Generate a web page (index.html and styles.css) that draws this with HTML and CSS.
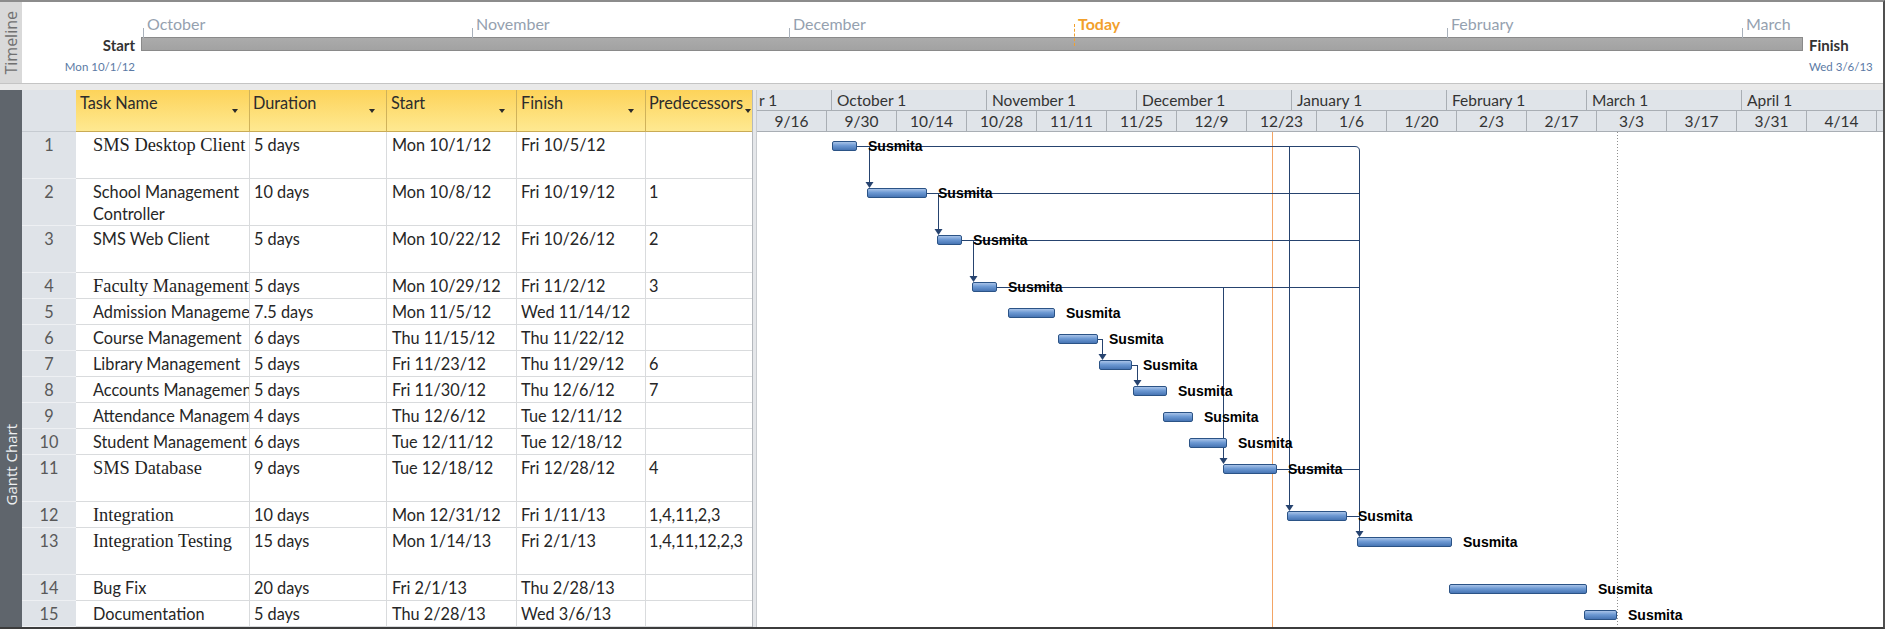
FILE: index.html
```html
<!DOCTYPE html>
<html>
<head>
<meta charset="utf-8">
<title>Gantt Chart</title>
<link rel="stylesheet" href="styles.css">
</head>
<body>
<div class="app">
  <section class="timeline">
    <div class="tl-strip"><span class="vlabel">Timeline</span></div>
    <div class="tl-main">
      <div class="tl-ends">
        <div class="tl-end-label">Start</div>
        <div class="tl-end-date">Mon 10/1/12</div>
      </div>
      <div class="tl-track">
        <span class="tl-mark" style="left:1px">October</span>
        <span class="tl-mark" style="left:330px">November</span>
        <span class="tl-mark" style="left:647px">December</span>
        <span class="tl-mark today" style="left:932px">Today</span>
        <span class="tl-mark" style="left:1305px">February</span>
        <span class="tl-mark" style="left:1600px">March</span>
      </div>
      <div class="tl-ends right">
        <div class="tl-end-label">Finish</div>
        <div class="tl-end-date">Wed 3/6/13</div>
      </div>
    </div>
  </section>
  <div class="pane-sep"></div>
  <section class="gantt">
    <div class="g-strip"><span class="vlabel">Gantt Chart</span></div>
    <div class="table">
      <div class="tr thead">
        <div class="td c-id"></div>
        <div class="td th c-name"><span>Task Name</span><i class="dd"></i></div>
        <div class="td th c-dur"><span>Duration</span><i class="dd"></i></div>
        <div class="td th c-start"><span>Start</span><i class="dd"></i></div>
        <div class="td th c-fin"><span>Finish</span><i class="dd"></i></div>
        <div class="td th c-pred"><span>Predecessors</span><i class="dd tight"></i></div>
      </div>
      <div class="tr tall"><div class="td c-id">1</div><div class="td c-name serif">SMS Desktop Client</div><div class="td c-dur">5 days</div><div class="td c-start">Mon 10/1/12</div><div class="td c-fin">Fri 10/5/12</div><div class="td c-pred"></div></div>
      <div class="tr tall"><div class="td c-id">2</div><div class="td c-name wrap">School Management Controller</div><div class="td c-dur">10 days</div><div class="td c-start">Mon 10/8/12</div><div class="td c-fin">Fri 10/19/12</div><div class="td c-pred">1</div></div>
      <div class="tr tall"><div class="td c-id">3</div><div class="td c-name">SMS Web Client</div><div class="td c-dur">5 days</div><div class="td c-start">Mon 10/22/12</div><div class="td c-fin">Fri 10/26/12</div><div class="td c-pred">2</div></div>
      <div class="tr"><div class="td c-id">4</div><div class="td c-name serif">Faculty Management</div><div class="td c-dur">5 days</div><div class="td c-start">Mon 10/29/12</div><div class="td c-fin">Fri 11/2/12</div><div class="td c-pred">3</div></div>
      <div class="tr"><div class="td c-id">5</div><div class="td c-name">Admission Management</div><div class="td c-dur">7.5 days</div><div class="td c-start">Mon 11/5/12</div><div class="td c-fin">Wed 11/14/12</div><div class="td c-pred"></div></div>
      <div class="tr"><div class="td c-id">6</div><div class="td c-name">Course Management</div><div class="td c-dur">6 days</div><div class="td c-start">Thu 11/15/12</div><div class="td c-fin">Thu 11/22/12</div><div class="td c-pred"></div></div>
      <div class="tr"><div class="td c-id">7</div><div class="td c-name">Library Management</div><div class="td c-dur">5 days</div><div class="td c-start">Fri 11/23/12</div><div class="td c-fin">Thu 11/29/12</div><div class="td c-pred">6</div></div>
      <div class="tr"><div class="td c-id">8</div><div class="td c-name">Accounts Management</div><div class="td c-dur">5 days</div><div class="td c-start">Fri 11/30/12</div><div class="td c-fin">Thu 12/6/12</div><div class="td c-pred">7</div></div>
      <div class="tr"><div class="td c-id">9</div><div class="td c-name">Attendance Management</div><div class="td c-dur">4 days</div><div class="td c-start">Thu 12/6/12</div><div class="td c-fin">Tue 12/11/12</div><div class="td c-pred"></div></div>
      <div class="tr"><div class="td c-id">10</div><div class="td c-name">Student Management</div><div class="td c-dur">6 days</div><div class="td c-start">Tue 12/11/12</div><div class="td c-fin">Tue 12/18/12</div><div class="td c-pred"></div></div>
      <div class="tr tall"><div class="td c-id">11</div><div class="td c-name serif">SMS Database</div><div class="td c-dur">9 days</div><div class="td c-start">Tue 12/18/12</div><div class="td c-fin">Fri 12/28/12</div><div class="td c-pred">4</div></div>
      <div class="tr"><div class="td c-id">12</div><div class="td c-name serif">Integration</div><div class="td c-dur">10 days</div><div class="td c-start">Mon 12/31/12</div><div class="td c-fin">Fri 1/11/13</div><div class="td c-pred">1,4,11,2,3</div></div>
      <div class="tr tall"><div class="td c-id">13</div><div class="td c-name serif">Integration Testing</div><div class="td c-dur">15 days</div><div class="td c-start">Mon 1/14/13</div><div class="td c-fin">Fri 2/1/13</div><div class="td c-pred">1,4,11,12,2,3</div></div>
      <div class="tr"><div class="td c-id">14</div><div class="td c-name">Bug Fix</div><div class="td c-dur">20 days</div><div class="td c-start">Fri 2/1/13</div><div class="td c-fin">Thu 2/28/13</div><div class="td c-pred"></div></div>
      <div class="tr"><div class="td c-id">15</div><div class="td c-name">Documentation</div><div class="td c-dur">5 days</div><div class="td c-start">Thu 2/28/13</div><div class="td c-fin">Wed 3/6/13</div><div class="td c-pred"></div></div>
    </div>
    <div class="splitter"></div>
    <div class="chart">
      <div class="ts">
        <div class="tier">
          <div class="tc m75">r 1</div>
          <div class="tc m155">October 1</div>
          <div class="tc m150">November 1</div>
          <div class="tc m155">December 1</div>
          <div class="tc m155">January 1</div>
          <div class="tc m140">February 1</div>
          <div class="tc m155">March 1</div>
          <div class="tc m141">April 1</div>
        </div>
        <div class="tier lower">
          <div class="tc w70">9/16</div>
          <div class="tc w70">9/30</div>
          <div class="tc w70">10/14</div>
          <div class="tc w70">10/28</div>
          <div class="tc w70">11/11</div>
          <div class="tc w70">11/25</div>
          <div class="tc w70">12/9</div>
          <div class="tc w70">12/23</div>
          <div class="tc w70">1/6</div>
          <div class="tc w70">1/20</div>
          <div class="tc w70">2/3</div>
          <div class="tc w70">2/17</div>
          <div class="tc w70">3/3</div>
          <div class="tc w70">3/17</div>
          <div class="tc w70">3/31</div>
          <div class="tc w70">4/14</div>
          <div class="tc w6"></div>
        </div>
      </div>
      <div class="cbody">
        <svg class="links" width="1126" height="495" viewBox="0 0 1126 495">
          <path class="today" d="M515.5 0 V495"/>
          <path class="finish" d="M860.5 0 V495"/>
          <path class="ln" d="M100 14.5 H598 Q602.5 14.5 602.5 19 M170 61.5 H602.5 M205 108.5 H602.5 M240 155.5 H602.5 M520 337.5 H602.5 M590 384.5 H602.5 M341 207.5 H345.5 M375 233.5 H380.5"/>
          <path class="ln" d="M112.5 14 V51 M181.5 61 V98 M216.5 108 V145 M345.5 207 V223 M380.5 233 V249 M466.5 155 V327 M532.5 14 V374 M602.5 19 V400"/>
          <g class="arr">
            <polygon points="108.5,50 116.5,50 112.5,56"/>
            <polygon points="177.5,97 185.5,97 181.5,103"/>
            <polygon points="212.5,144 220.5,144 216.5,150"/>
            <polygon points="341.5,222 349.5,222 345.5,228"/>
            <polygon points="376.5,248 384.5,248 380.5,254"/>
            <polygon points="462.5,326 470.5,326 466.5,332"/>
            <polygon points="528.5,373 536.5,373 532.5,379"/>
            <polygon points="598.5,399 606.5,399 602.5,405"/>
          </g>
        </svg>
        <div class="bar" style="left:75px;top:9px;width:25px"></div>
        <div class="bar" style="left:110px;top:56px;width:60px"></div>
        <div class="bar" style="left:180px;top:103px;width:25px"></div>
        <div class="bar" style="left:215px;top:150px;width:25px"></div>
        <div class="bar" style="left:251px;top:176px;width:47px"></div>
        <div class="bar" style="left:301px;top:202px;width:40px"></div>
        <div class="bar" style="left:342px;top:228px;width:33px"></div>
        <div class="bar" style="left:376px;top:254px;width:34px"></div>
        <div class="bar" style="left:406px;top:280px;width:30px"></div>
        <div class="bar" style="left:432px;top:306px;width:38px"></div>
        <div class="bar" style="left:466px;top:332px;width:54px"></div>
        <div class="bar" style="left:530px;top:379px;width:60px"></div>
        <div class="bar" style="left:600px;top:405px;width:95px"></div>
        <div class="bar" style="left:692px;top:452px;width:138px"></div>
        <div class="bar" style="left:827px;top:478px;width:33px"></div>
        <span class="res" style="left:111px;top:5px">Susmita</span>
        <span class="res" style="left:181px;top:52px">Susmita</span>
        <span class="res" style="left:216px;top:99px">Susmita</span>
        <span class="res" style="left:251px;top:146px">Susmita</span>
        <span class="res" style="left:309px;top:172px">Susmita</span>
        <span class="res" style="left:352px;top:198px">Susmita</span>
        <span class="res" style="left:386px;top:224px">Susmita</span>
        <span class="res" style="left:421px;top:250px">Susmita</span>
        <span class="res" style="left:447px;top:276px">Susmita</span>
        <span class="res" style="left:481px;top:302px">Susmita</span>
        <span class="res" style="left:531px;top:328px">Susmita</span>
        <span class="res" style="left:601px;top:375px">Susmita</span>
        <span class="res" style="left:706px;top:401px">Susmita</span>
        <span class="res" style="left:841px;top:448px">Susmita</span>
        <span class="res" style="left:871px;top:474px">Susmita</span>
      </div>
    </div>
  </section>
</div>
</body>
</html>
```

FILE: styles.css
```css
* { box-sizing: border-box; }
html, body { margin: 0; padding: 0; }
body {
  width: 1885px;
  height: 629px;
  overflow: hidden;
  background: #ffffff;
  font-family: "Lato", "Open Sans", sans-serif;
  color: #262626;
}
.app {
  width: 1885px;
  height: 629px;
  border-top: 2px solid #8c8c8c;
  border-right: 2px solid #505050;
  border-bottom: 2px solid #3c3c3c;
  display: flex;
  flex-direction: column;
}

/* ---------- vertical view labels ---------- */
.vlabel {
  writing-mode: vertical-rl;
  transform: rotate(180deg);
  font-family: "Open Sans", sans-serif;
  font-size: 15px;
  line-height: 22px;
  white-space: nowrap;
}

/* ---------- timeline ---------- */
.timeline {
  height: 81px;
  display: flex;
  background: #ffffff;
}
.tl-strip {
  width: 22px;
  background: #d9d9d9;
  color: #707070;
  display: flex;
  align-items: center;
  justify-content: center;
}
.tl-strip .vlabel { font-size: 16px; }
.tl-main {
  flex: 1;
  display: flex;
  padding-top: 34px;
}
.tl-ends {
  width: 119px;
  padding-right: 6px;
  text-align: right;
}
.tl-ends.right {
  width: auto;
  flex: 1;
  padding-right: 0;
  padding-left: 6px;
  text-align: left;
}
.tl-end-label {
  font-size: 15px;
  font-weight: 700;
  line-height: 18px;
  color: #333333;
}
.tl-end-date {
  margin-top: 6px;
  font-size: 11.5px;
  line-height: 14px;
  color: #5b7aa5;
}
.tl-track {
  width: 1662px;
  height: 14px;
  margin-top: 1px;
  position: relative;
  background: linear-gradient(#ababab, #a2a2a2);
  border: 1px solid #8a8a8a;
}
.tl-mark {
  position: absolute;
  top: -24px;
  height: 20px;
  line-height: 20px;
  padding-left: 4px;
  font-size: 16px;
  color: #95a1af;
  white-space: nowrap;
}
.tl-mark::before {
  content: "";
  position: absolute;
  left: 0;
  top: 14px;
  width: 1px;
  height: 10px;
  background: #a9b1bb;
}
.tl-mark.today {
  color: #f2a02c;
  font-weight: 700;
}
.tl-mark.today::before {
  top: 10px;
  height: 22px;
  background: none;
  border-left: 1px dashed #f2a02c;
}

.pane-sep {
  height: 7px;
  background: #e9e9e9;
  border-top: 1px solid #c4c4c4;
}

/* ---------- gantt view ---------- */
.gantt {
  flex: 1;
  display: flex;
  min-height: 0;
}
.g-strip {
  width: 22px;
  background: #5f656c;
  color: #eef0f2;
  display: flex;
  flex-direction: column;
  justify-content: flex-end;
  align-items: center;
  padding-bottom: 122px;
}

/* ---------- table ---------- */
.table {
  width: 730px;
  display: flex;
  flex-direction: column;
}
.tr {
  display: flex;
  height: 26px;
}
.tr.tall { height: 47px; }
.tr.thead { height: 42px; }
.td {
  border-right: 1px solid #d9dbdd;
  border-bottom: 1px solid #d9dbdd;
  padding: 2px 4px 0;
  font-size: 16.3px;
  line-height: 22px;
  white-space: nowrap;
  overflow: hidden;
  text-overflow: clip;
}
.c-id {
  width: 54px;
  background: #dfe3e8;
  color: #595959;
  text-align: center;
  border-right: none;
  border-bottom-color: #eef0f3;
}
.thead .c-id { border-bottom-color: #c6cbd1; }
.c-name { width: 174px; padding-left: 17px; }
.c-dur { width: 137px; }
.c-start { width: 130px; padding-left: 5px; }
.c-fin { width: 129px; }
.c-pred { width: 106px; padding-left: 3px; border-right: none; }
.serif {
  font-family: "Liberation Serif", serif;
  font-size: 18.4px;
  color: #1e1e1e;
}
.wrap { white-space: normal; line-height: 22px; }
.th {
  display: flex;
  align-items: flex-start;
  background: linear-gradient(#fdd35a, #fee991);
  border-right: 1px solid #cfb25a;
  border-bottom: 1px solid #c9ab55;
  color: #2c2c2c;
  padding-left: 4px;
}
.th.c-name { padding-left: 4px; }
.th.c-dur { padding-left: 3px; }
.th.c-pred { padding-left: 3px; border-right: none; }
.dd {
  margin-left: auto;
  margin-right: 7px;
  margin-top: 17px;
  width: 0;
  height: 0;
  border-left: 3.5px solid transparent;
  border-right: 3.5px solid transparent;
  border-top: 4px solid #2a2a2a;
  flex: none;
}
.dd.tight { margin-right: 1px; margin-left: 2px; }

.splitter {
  width: 5px;
  background: #e5e7ea;
  border-left: 1px solid #b4b8bd;
  border-right: 1px solid #c8cbcf;
}

/* ---------- chart ---------- */
.chart {
  width: 1126px;
  display: flex;
  flex-direction: column;
}
.ts {
  height: 42px;
  background: #e0e4e9;
}
.tier {
  display: flex;
  height: 21px;
  border-bottom: 1px solid #a9aeb4;
}
.tc {
  height: 20px;
  line-height: 20px;
  border-right: 1px solid #a9aeb4;
  font-size: 15.5px;
  color: #333333;
  padding-left: 5px;
  white-space: nowrap;
  overflow: hidden;
}
.lower .tc { text-align: center; padding-left: 0; }
.m75 { width: 75px; padding-left: 2px; }
.m155 { width: 155px; }
.m150 { width: 150px; }
.m140 { width: 140px; }
.m141 { width: 141px; border-right: none; }
.w70 { width: 70px; }
.w6 { width: 6px; border-right: none; }

.cbody {
  flex: 1;
  position: relative;
  overflow: hidden;
  background: #ffffff;
}
.links {
  position: absolute;
  left: 0;
  top: 0;
}
.links path { fill: none; }
.links .ln { stroke: #26436f; stroke-width: 1; }
.links .today { stroke: #f3a565; stroke-width: 1; shape-rendering: crispEdges; }
.links .finish { stroke: #8f8f8f; stroke-width: 1; stroke-dasharray: 1 2; shape-rendering: crispEdges; }
.links .arr polygon { fill: #26436f; }
.bar {
  position: absolute;
  height: 10px;
  border: 1px solid #2b5386;
  border-radius: 2px;
  background: linear-gradient(#a8c3e8 0%, #6d99d3 45%, #4775b4 100%);
}
.res {
  position: absolute;
  font-family: "Liberation Sans", sans-serif;
  font-weight: 700;
  font-size: 14px;
  line-height: 18px;
  color: #000000;
  white-space: nowrap;
}
```
